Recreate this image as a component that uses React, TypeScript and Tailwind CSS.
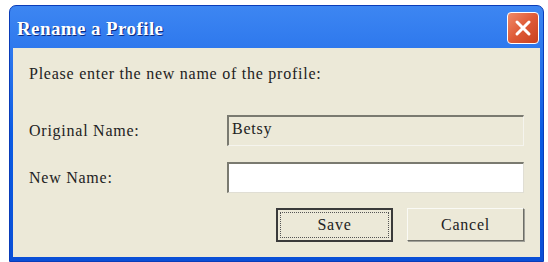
import React from "react";

export default function App() {
  return (
    <div className="w-[548px] h-[262px] bg-white pt-[5px] pl-[9px] overflow-hidden" style={{ fontFamily: '"Liberation Serif", serif' }}>
      <div className="w-[535px] h-[257px] flex flex-col rounded-t-[7px] bg-gradient-to-b from-[#3d86f2] via-[#0b5be3] to-[#0a4fd6] border border-[#0a3cb8]">
        <div className="h-[42px] flex items-start justify-between pl-[7px] pr-[4px]">
          <span className="mt-[9px] text-white font-bold text-[19px] tracking-[0.4px] [text-shadow:1px_1px_0_#0a2a80]">Rename a Profile</span>
          <div className="mt-[6px] w-[32px] h-[32px] rounded-[4px] border border-white bg-gradient-to-br from-[#f08a68] via-[#de5a36] to-[#c8401e] flex items-center justify-center">
            <svg width="18" height="18" viewBox="0 0 18 18">
              <path d="M3 3 L15 15 M15 3 L3 15" stroke="white" strokeWidth="3" strokeLinecap="round" />
            </svg>
          </div>
        </div>
        <div className="flex-1 mx-[3px] mb-[4px] bg-[#ECE9D8] pl-[16px] pr-[16px] pt-[16px] text-[16px] tracking-[0.75px] text-[#222]">
          <div className="h-[20px] leading-[20px]">Please enter the new name of the profile:</div>
          <div className="mt-[31px] flex items-center h-[31px]">
            <span className="w-[198px]">Original Name:</span>
            <div className="flex-1 h-[31px] border-t-2 border-l-2 border-[#7a7a70] border-b border-r border-b-[#f5f4ee] border-r-[#f5f4ee] px-[3px] leading-[24px]">Betsy</div>
          </div>
          <div className="mt-[16px] flex items-center h-[31px]">
            <span className="w-[198px]">New Name:</span>
            <div className="flex-1 h-[31px] bg-white border-t-2 border-l-2 border-[#7a7a70] border-b border-r border-b-[#e0ded4] border-r-[#e0ded4]"></div>
          </div>
          <div className="mt-[15px] flex justify-end gap-[14px]">
            <div className="w-[117px] h-[34px] border-2 border-[#3a3a3a] bg-[#ECE9D8] p-[2px]">
              <div className="w-full h-full border border-dotted border-[#555] flex items-center justify-center">Save</div>
            </div>
            <div className="w-[117px] h-[33px] border border-t-[#fafaf5] border-l-[#fafaf5] border-b-[#6d6d66] border-r-[#6d6d66] shadow-[1px_1px_0_#a0a098] flex items-center justify-center">Cancel</div>
          </div>
        </div>
      </div>
    </div>
  );
}
